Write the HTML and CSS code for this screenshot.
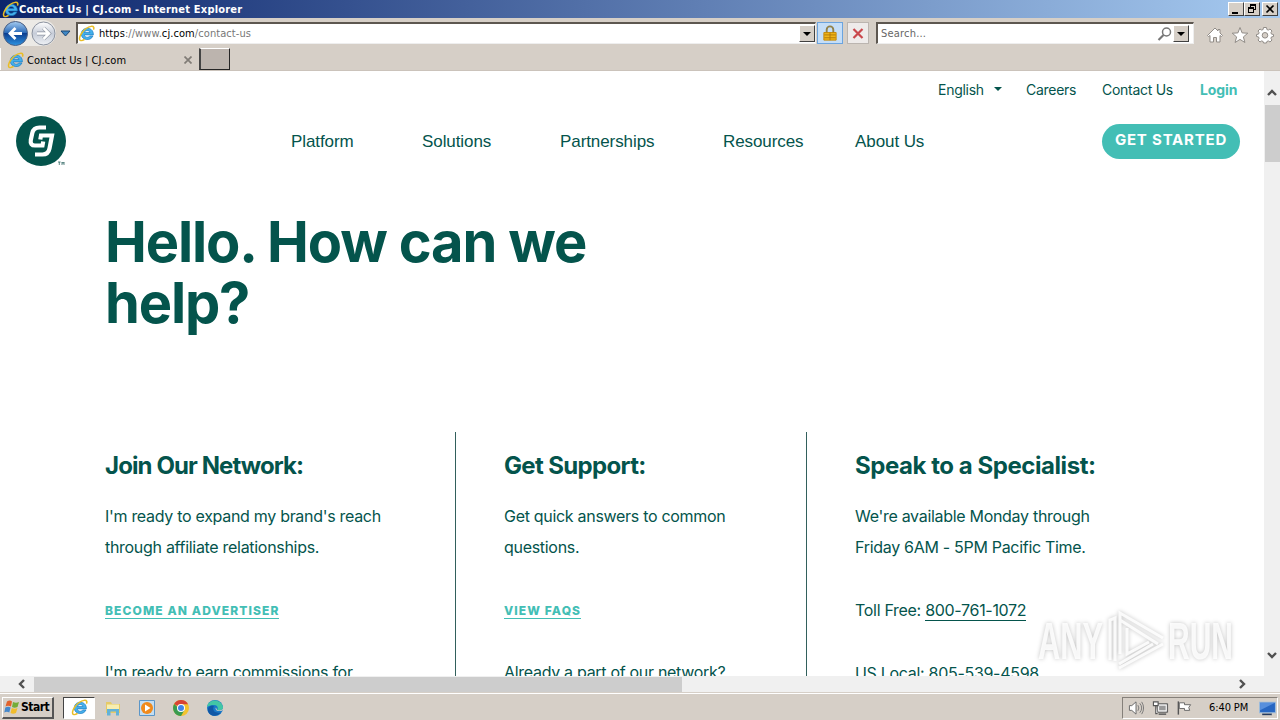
FILE: index.html
```html
<!doctype html>
<html lang="en">
  <head>
    <meta charset="utf-8">
    <title>Contact Us | CJ.com</title>
    <link rel="stylesheet" href="styles.css">
  </head>
  <body>
    <svg class="defs" width="0" height="0">
      <symbol id="ie" viewBox="0 0 16 16">
        <path d="M14.500 9.300H6c.3 2.600 4 2.900 5 1h3.100c-1.900 5.100-10.900 4.500-11-1.800C3 1.200 14.800.8 14.500 9.300zM6.100 7.100h5.200C11 4.700 6.500 4.700 6.100 7.100z" fill="#45b0ec" stroke="#1675bd" stroke-width=".6"/>
        <path d="M2.200 14.500C-.8 12.500 5.500 2.300 12.300 1.300c3-.4 2.900 1.600 2.200 3M2.200 14.500c1.200.6 2.800-.2 4-1" fill="none" stroke="#e9bd25" stroke-width="1.400"/>
      </symbol>
    </svg>

    <header class="titlebar">
      <svg class="ie"><use href="#ie"/></svg>
      <span class="title">Contact Us | CJ.com - Internet Explorer</span>
      <div class="winbtns">
        <b><svg viewBox="0 0 14 12"><path d="M3 9h6v2H3z"/></svg></b>
        <b><svg viewBox="0 0 14 12"><path d="M5 1h6v6H9V6h1V3H6v1H5zM3 4h6v6H3zm1 2v3h4V6z" fill-rule="evenodd"/></svg></b>
        <b class="close"><svg viewBox="0 0 14 12"><path d="M3.500 2.500l7 7m0-7l-7 7" stroke="#000" stroke-width="1.700"/></svg></b>
      </div>
    </header>

    <div class="toolbar">
      <svg class="navbtns" viewBox="0 0 74 30">
        <defs>
          <linearGradient id="blue" x2="0" y2="1"><stop offset="0" stop-color="#a6cdf2"/><stop offset=".48" stop-color="#2767b6"/><stop offset=".5" stop-color="#0c3e90"/><stop offset="1" stop-color="#2e94e2"/></linearGradient>
          <linearGradient id="pale" x2="0" y2="1"><stop offset="0" stop-color="#fff"/><stop offset=".5" stop-color="#c6ccd8"/><stop offset="1" stop-color="#eef1f5"/></linearGradient>
        </defs>
        <path d="M15 2h28a13 13 0 0 1 0 26H15" fill="#eceae6"/>
        <circle cx="15.500" cy="15.500" r="12" fill="url(#blue)" stroke="#4b5f83"/>
        <path d="M22 15.500H10m5.500-5.500L10 15.500l5.500 5.500" fill="none" stroke="#fff" stroke-width="2.800"/>
        <circle cx="43.500" cy="15.500" r="11.500" fill="url(#pale)" stroke="#8b929f"/>
        <path d="M37 15.500h12M43.500 10l5.500 5.500-5.500 5.500" fill="none" stroke="#8b929f" stroke-width="3.800"/>
        <path d="M37 15.500h12M43.500 10l5.500 5.500-5.500 5.500" fill="none" stroke="#fff" stroke-width="2.600"/>
        <path d="M61 13h9l-4.500 5z" fill="#3f88c5" stroke="#1d4673"/>
      </svg>
      <div class="address field">
        <svg class="ie"><use href="#ie"/></svg>
        <span class="url"><i>https</i>://www.<i>cj.com</i>/contact-us</span>
        <b class="drop"></b>
      </div>
      <div class="tool lock">
        <svg viewBox="0 0 16 18"><path d="M4.500 9V5a3.500 3.500 0 0 1 7 0v4" fill="none" stroke="#92824b" stroke-width="2"/><path d="M1.500 8h13v8h-13z" fill="#f0b51a" stroke="#c48605"/><path d="M2 10.500h12M2 13.500h12M8 8v8" stroke="#b27a09"/></svg>
      </div>
      <div class="tool stop">
        <svg viewBox="0 0 16 16"><path d="M3.500 3.500l9 9m0-9l-9 9" stroke="#c9474c" stroke-width="2.200"/></svg>
      </div>
      <div class="search field">
        <span>Search...</span>
        <svg viewBox="0 0 16 16"><circle cx="9.500" cy="6" r="4" fill="none" stroke="#777" stroke-width="1.500"/><path d="M6.500 9l-5 5" stroke="#777" stroke-width="2.200"/></svg>
        <b class="drop"></b>
      </div>
      <div class="corner">
        <svg viewBox="0 0 18 18"><path d="M9 2L1.500 9.500l1 1L4 9.500V16h3.500v-4.500h3V16H14V9.500l1.500 1 1-1L14 7V3.500h-2V5z"/></svg>
        <svg viewBox="0 0 18 18"><path d="M9 1.500l2.100 5.400 5.700.3-4.400 3.700 1.500 5.600L9 13.400l-4.900 3.100 1.500-5.600L1.200 7.200l5.700-.3z"/></svg>
        <svg viewBox="0 0 18 18"><path d="M7.500 1.500h3l.4 2 1.400.6L14 3l2 2-1.100 1.700.6 1.400 2 .4v2l-2 .4-.6 1.400L16 14l-2 2-1.700-1.100-1.400.6-.4 1.500h-3l-.4-1.500-1.400-.6L4 16l-2-2 1.100-1.700-.6-1.400-2-.4v-2l2-.4.6-1.400L2 5l2-2 1.700 1.100 1.400-.6z"/><circle cx="9" cy="9.300" r="2.800" fill="#d6cfc7"/></svg>
      </div>
    </div>

    <div class="tabs">
      <div class="tab">
        <svg class="ie"><use href="#ie"/></svg>
        <span>Contact Us | CJ.com</span>
        <svg class="x" viewBox="0 0 8 8"><path d="M.5.5l7 7m0-7l-7 7" stroke="#807c76" stroke-width="1.700"/></svg>
      </div>
      <div class="newtab"></div>
    </div>

    <div class="view">
      <main class="page">
        <div class="toplinks">
          <a class="lang">English</a>
          <a>Careers</a>
          <a>Contact Us</a>
          <a class="login">Login</a>
        </div>
        <div class="mainbar">
          <svg class="logo" viewBox="0 0 50 50">
            <circle cx="25" cy="25" r="25" fill="#04544c"/>
            <path d="M30 11.500H23.500q-6 0-7.200 5.500l-1.500 7q-.9 5.500 4.200 5.500h7.500l.7-4" fill="none" stroke="#fff" stroke-width="4.200"/>
            <path d="M24.300 23.500l.7-4h11l-2.500 13q-1.200 6-7 6H19" fill="none" stroke="#fff" stroke-width="4.200"/>
            <path d="M42 46h2.600m-1.300 0v3M46 49v-3l1 1.500 1-1.500v3" fill="none" stroke="#356b67" stroke-width=".8"/>
          </svg>
          <nav>
            <a>Platform</a>
            <a>Solutions</a>
            <a>Partnerships</a>
            <a>Resources</a>
            <a>About Us</a>
          </nav>
          <a class="cta">GET STARTED</a>
        </div>
        <h1>Hello. How can we<br>help?</h1>
        <div class="cols">
          <section class="join">
            <h2>Join Our Network:</h2>
            <p>I'm ready to expand my brand's reach<br>through affiliate relationships.</p>
            <a class="more">BECOME AN ADVERTISER</a>
            <p>I'm ready to earn commissions for</p>
          </section>
          <section class="support">
            <h2>Get Support:</h2>
            <p>Get quick answers to common<br>questions.</p>
            <a class="more">VIEW FAQS</a>
            <p>Already a part of our network?</p>
          </section>
          <section class="speak">
            <h2>Speak to a Specialist:</h2>
            <p>We're available Monday through<br>Friday 6AM - 5PM Pacific Time.</p>
            <p class="tel">Toll Free: <a>800-761-1072</a></p>
            <p>US Local: <a>805-539-4598</a></p>
          </section>
        </div>
      </main>
      <div class="vscroll">
        <svg viewBox="0 0 16 10"><path d="M4 8l4-4 4 4"/></svg>
        <div class="thumb"></div>
        <svg class="down" viewBox="0 0 16 10"><path d="M4 3l4 4 4-4"/></svg>
      </div>
    </div>

    <div class="hscroll">
      <svg viewBox="0 0 10 16"><path d="M8 4L4 8l4 4"/></svg>
      <div class="thumb"></div>
      <svg class="right" viewBox="0 0 10 16"><path d="M2 4l4 4-4 4"/></svg>
    </div>

    <footer class="taskbar">
      <div class="start">
        <svg viewBox="0 0 16 16"><path d="M3 2.500q3-2 5 0L7 7.500q-3-1.500-5.500 0z" fill="#e2622b"/><path d="M9 3q3 1.500 6 0l-1.500 5q-3 1.500-5.500 0z" fill="#74ac39"/><path d="M1.300 8.500q3-1.500 5.300 0l-1.300 5q-2.500-1.500-5 0z" fill="#4588cc"/><path d="M7.800 9q3 1.500 5.700 0L12 14q-3 1.500-5.500 0z" fill="#f1bd2d"/></svg>
        <span>Start</span>
      </div>
      <div class="apps">
        <div class="active"><svg class="ie"><use href="#ie"/></svg></div>
        <svg viewBox="0 0 16 16"><path d="M1 2h5l1 2h8v9H1z" fill="#e5ca68"/><path d="M2 4.500h12V10H2z" fill="#f8eeb0"/><path d="M2 15.500V9h12v6.500h-3v-4H5.500v4z" fill="#62b2d8"/></svg>
        <svg viewBox="0 0 16 16"><path d="M.5.500h15v15H.5z" fill="#c4def2" stroke="#5b96c8"/><circle cx="8" cy="8" r="6" fill="#f18a1b"/><path d="M6 4.500L11.500 8 6 11.500z" fill="#fff"/></svg>
        <svg viewBox="0 0 16 16"><circle cx="8" cy="8" r="8" fill="#f3c32e"/><path d="M8 8L1.100 4A8 8 0 0 1 15 4.200H8z" fill="#d84335"/><path d="M1.100 4A8 8 0 0 0 8 16l3.500-6H8z" fill="#3a9b50"/><circle cx="8" cy="8" r="4" fill="#fff"/><circle cx="8" cy="8" r="3" fill="#4285e8"/></svg>
        <svg viewBox="0 0 16 16"><circle cx="8" cy="8" r="8" fill="#1878c8"/><path d="M0 7C1-1.500 14-2 16 7c.5 3-3 4.500-6 3 1.500-1 1-5-3-5C4 5 1 6 0 7z" fill="#43c6a5"/><path d="M7 6c-2 3-.5 8 7 6.500C8 19 0 14.500 1 9c.5-3 4-4.500 6-3z" fill="#1057a5"/><path d="M9 7.500c-1 1-.5 4 5 3.500 2-.5 2-1.500 2-2.500-1 2-4 2.500-6 1.500z" fill="#d6d0c8"/></svg>
      </div>
      <div class="tray">
        <svg viewBox="0 0 18 16"><path d="M1.500 5.500H4l4.500-4v13l-4.500-4H1.500z" fill="#fff" stroke="#666"/><path d="M10.500 5q2 3 0 6M12.500 3q4 5 0 10M14.500 1.500q4 6.500 0 13" fill="none" stroke="#777"/></svg>
        <svg viewBox="0 0 18 16"><path d="M5.500 3.500h11v9h-11z" fill="#c9c9c9" stroke="#555"/><path d="M7 5h8v6H7z" fill="#999" stroke="#fff"/><path d="M7 14.500h8" stroke="#555" stroke-width="1.500"/><path d="M1.500 1.500h5v4h-5zM4 6v8h2" fill="#fff" stroke="#555" stroke-width="1.200"/></svg>
        <svg viewBox="0 0 18 16"><path d="M2.500 1v14" stroke="#555" stroke-width="1.500"/><path d="M3.500 2.500H9v2h6.500l-2 3 1 3H9v-2H3.500z" fill="#fff" stroke="#666"/></svg>
        <span>6:40 PM</span>
        <svg class="desk" viewBox="0 0 16 14"><path d="M.5 1.500h15v10H.5z" fill="#2766c2" stroke="#9bbbdc"/><path d="M1 2h14L1 9z" fill="#578fdd"/><path d="M3 13h9" stroke="#253b5e" stroke-width="1.500"/></svg>
      </div>
    </footer>

    <svg class="watermark" viewBox="0 0 200 70">
      <g class="letters">
        <text x="1" y="53" textLength="65" lengthAdjust="spacingAndGlyphs">ANY</text>
        <text x="131" y="53" textLength="65" lengthAdjust="spacingAndGlyphs">RUN</text>
      </g>
      <path class="play" d="M73 54V14l5-2v43M83 48V7l43 25M83 14l38 24M90 22v26l22-12M82 62l44-24M82 58l34-20"/>
    </svg>
  </body>
</html>
```

FILE: styles.css
```css
* {
  box-sizing: border-box;
  margin: 0;
  padding: 0;
}

body {
  width: 1280px;
  height: 720px;
  overflow: hidden;
  display: flex;
  flex-direction: column;
  background: #d6cfc7;
  font: 11px "DejaVu Sans Condensed", "DejaVu Sans", sans-serif;
  font-stretch: condensed;
  color: #000;
  position: relative;
}

svg {
  display: block;
  flex: none;
}

.defs {
  position: absolute;
}

.ie {
  width: 17px;
  height: 17px;
}

/* browser chrome */
.titlebar {
  height: 18px;
  flex: none;
  display: flex;
  align-items: center;
  padding: 0 2px;
  background: linear-gradient(90deg, #0b246b, #a6caf0);
  color: #fff;
}

.title {
  flex: 1;
  font-weight: bold;
  letter-spacing: .2px;
}

.winbtns {
  display: flex;
}

.winbtns b {
  width: 16px;
  height: 14px;
  background: #d6cfc7;
  border: 1px solid;
  border-color: #fff #404040 #404040 #fff;
}

.winbtns .close {
  margin-left: 2px;
}

.winbtns svg {
  width: 14px;
  height: 12px;
}

.toolbar {
  height: 30px;
  flex: none;
  display: flex;
  align-items: center;
}

.navbtns {
  width: 74px;
  height: 30px;
  margin-right: 2px;
}

.field {
  height: 22px;
  display: flex;
  align-items: center;
  background: #fff;
  border: 1px solid;
  border-width: 2px 1px 1px 2px;
  border-color: #5d5750 #eee #eee #5d5750;
}

.address {
  width: 740px;
}

.url {
  flex: 1;
  margin-left: 4px;
  color: #777;
  letter-spacing: .08px;
}

.url i {
  font-style: normal;
  color: #000;
}

.drop {
  width: 16px;
  height: 17px;
  background: #d6cfc7;
  border: 1px solid;
  border-color: #fff #404040 #404040 #fff;
  display: flex;
  align-items: center;
  justify-content: center;
}

.drop::after {
  content: "";
  border: 4px solid transparent;
  border-top-color: #000;
  border-bottom: 0;
}

.tool {
  height: 22px;
  display: flex;
  align-items: center;
  justify-content: center;
}

.tool svg {
  width: 16px;
  height: 17px;
}

.lock {
  width: 26px;
  margin-left: 1px;
  background: #c5def8;
  border: 1px solid #6ba4df;
}

.stop {
  width: 22px;
  margin: 0 7px 0 4px;
  background: #eeebea;
  border: 1px solid #bbb5b0;
}

.search {
  width: 318px;
  color: #666;
}

.search span {
  flex: 1;
  padding-left: 3px;
  letter-spacing: .2px;
}

.search svg {
  width: 16px;
  height: 16px;
}

.search .drop {
  margin-right: 4px;
}

.corner {
  display: flex;
  gap: 7px;
  padding: 4px 0 0 12px;
}

.corner svg {
  width: 18px;
  height: 18px;
  fill: #fff;
  stroke: #918c87;
}

.tabs {
  height: 23px;
  flex: none;
  display: flex;
  border-bottom: 1px solid #cbc3bb;
}

.tab {
  width: 199px;
  display: flex;
  align-items: center;
  padding: 2px 7px 0 6px;
  border-left: 1px solid #fff;
}

.tab span {
  flex: 1;
  margin-left: 3px;
  letter-spacing: .07px;
}

.x {
  width: 8px;
  height: 8px;
}

.newtab {
  width: 31px;
  height: 22px;
  background: #bcb4ae;
  border: 1px solid;
  border-width: 1px 1px 1px 2px;
  border-color: #fff #252525 #252525 #444;
}

/* web page */
.view {
  height: 605px;
  flex: none;
  display: flex;
}

.page {
  width: 1264px;
  overflow: hidden;
  background: #fff;
  color: #04544c;
  font-family: Inter, sans-serif;
  font-stretch: normal;
}

.toplinks {
  height: 38px;
  display: grid;
  grid-template-columns: 88px 76px 98px auto;
  align-items: center;
  padding: 0 0 1px 938px;
  font-size: 14px;
  letter-spacing: -.28px;
}

.lang {
  display: flex;
  align-items: center;
}

.lang::after {
  content: "";
  margin: 0 0 2px 10px;
  border: 4.5px solid transparent;
  border-top-color: #04544c;
  border-bottom: 0;
}

.login {
  color: #43beb5;
  font-weight: 700;
  letter-spacing: -.1px;
}

.mainbar {
  height: 64px;
  display: flex;
  align-items: center;
  padding-left: 16px;
}

.logo {
  width: 50px;
  height: 50px;
}

nav {
  width: 811px;
  margin-left: 225px;
  padding-top: 2px;
  display: grid;
  grid-template-columns: 131px 138px 163px 132px auto;
  font: 17px "Liberation Sans", sans-serif;
  letter-spacing: -.08px;
}

.cta {
  width: 138px;
  height: 35px;
  border-radius: 18px;
  background: #43beb5;
  color: #fff;
  font-size: 15px;
  font-weight: 700;
  line-height: 32px;
  letter-spacing: .8px;
  text-align: center;
}

h1 {
  height: 259px;
  padding: 39px 0 0 105px;
  font-size: 56px;
  font-weight: 700;
  line-height: 61px;
  letter-spacing: -1.15px;
}

.cols {
  display: grid;
  grid-template-columns: 351px 351px 400px;
  padding-left: 105px;
}

section {
  height: 260px;
  padding-top: 16px;
  border-right: 1px solid #32605c;
}

.support {
  padding-left: 48px;
}

.speak {
  padding-left: 48px;
  border: 0;
}

h2 {
  margin-bottom: 17px;
  font-size: 24px;
  line-height: 36px;
  letter-spacing: -.65px;
}

.join h2 {
  letter-spacing: -.9px;
}

.speak h2 {
  letter-spacing: -.45px;
}

p {
  font-size: 16px;
  line-height: 31px;
  letter-spacing: -.3px;
  white-space: nowrap;
}

.more {
  display: table;
  margin: 41px 0 38px;
  border-bottom: 1px solid #43beb5;
  color: #43beb5;
  font-size: 12px;
  font-weight: 800;
  line-height: 14px;
  letter-spacing: 1.1px;
}

.tel {
  margin: 32px 0;
}

.speak p a {
  display: inline-block;
  border-bottom: 1px solid #04544c;
  line-height: 19px;
}

.vscroll {
  width: 16px;
  background: #f0f0f0;
  display: flex;
  flex-direction: column;
  padding: 16px 0;
}

.vscroll svg {
  width: 16px;
  height: 10px;
}

.vscroll .thumb {
  height: 57px;
  margin: 8px 0 0 1px;
}

.vscroll .down {
  margin-top: auto;
}

.thumb {
  background: #cdcdcd;
}

.hscroll svg,
.vscroll svg {
  fill: none;
  stroke: #505050;
  stroke-width: 2.4;
}

.hscroll {
  height: 16px;
  flex: none;
  display: flex;
  align-items: center;
  padding: 0 32px 0 16px;
  background: #f0f0f0;
}

.hscroll svg {
  width: 10px;
  height: 16px;
}

.hscroll .thumb {
  width: 648px;
  height: 15px;
  margin-left: 8px;
}

.hscroll .right {
  margin-left: auto;
}

/* taskbar */
.taskbar {
  height: 27px;
  margin-top: 1px;
  flex: none;
  display: flex;
  align-items: center;
  padding: 1px 2px 0;
  border-top: 1px solid #fff;
}

.start {
  width: 52px;
  height: 22px;
  display: flex;
  align-items: center;
  gap: 1px;
  border: 1px solid;
  border-width: 1px 2px 2px 1px;
  border-color: #fff #555 #555 #fff;
  padding-left: 1px;
  font-size: 12px;
  font-weight: bold;
  letter-spacing: -.5px;
}

.start svg {
  width: 16px;
  height: 16px;
}

.apps {
  display: flex;
  align-items: center;
  gap: 18px;
  margin-left: 9px;
}

.apps > svg {
  width: 16px;
  height: 16px;
}

.active {
  width: 32px;
  height: 22px;
  margin-right: -8px;
  padding: 1px 7px;
  background: #fff;
  border: 1px solid;
  border-color: #444 #fff #fff #444;
}

.tray {
  width: 156px;
  height: 22px;
  margin-left: auto;
  display: flex;
  align-items: center;
  gap: 7px;
  padding-left: 5px;
  border: 1px solid;
  border-color: #85807a #fff #fff #85807a;
}

.tray svg {
  width: 17px;
  height: 16px;
}

.tray span {
  margin-left: 9px;
  white-space: nowrap;
  letter-spacing: -.1px;
}

.tray .desk {
  margin-left: 4px;
}

.watermark {
  position: absolute;
  left: 1037px;
  top: 606px;
  width: 200px;
  height: 70px;
  filter: drop-shadow(0 0 2px rgba(0, 0, 0, .28));
}

.letters {
  font: bold 51px "Liberation Sans", sans-serif;
  fill: #fff;
  fill-opacity: .85;
}

.play {
  fill: none;
  stroke: #fff;
  stroke-width: 3;
  stroke-opacity: .85;
}
```
